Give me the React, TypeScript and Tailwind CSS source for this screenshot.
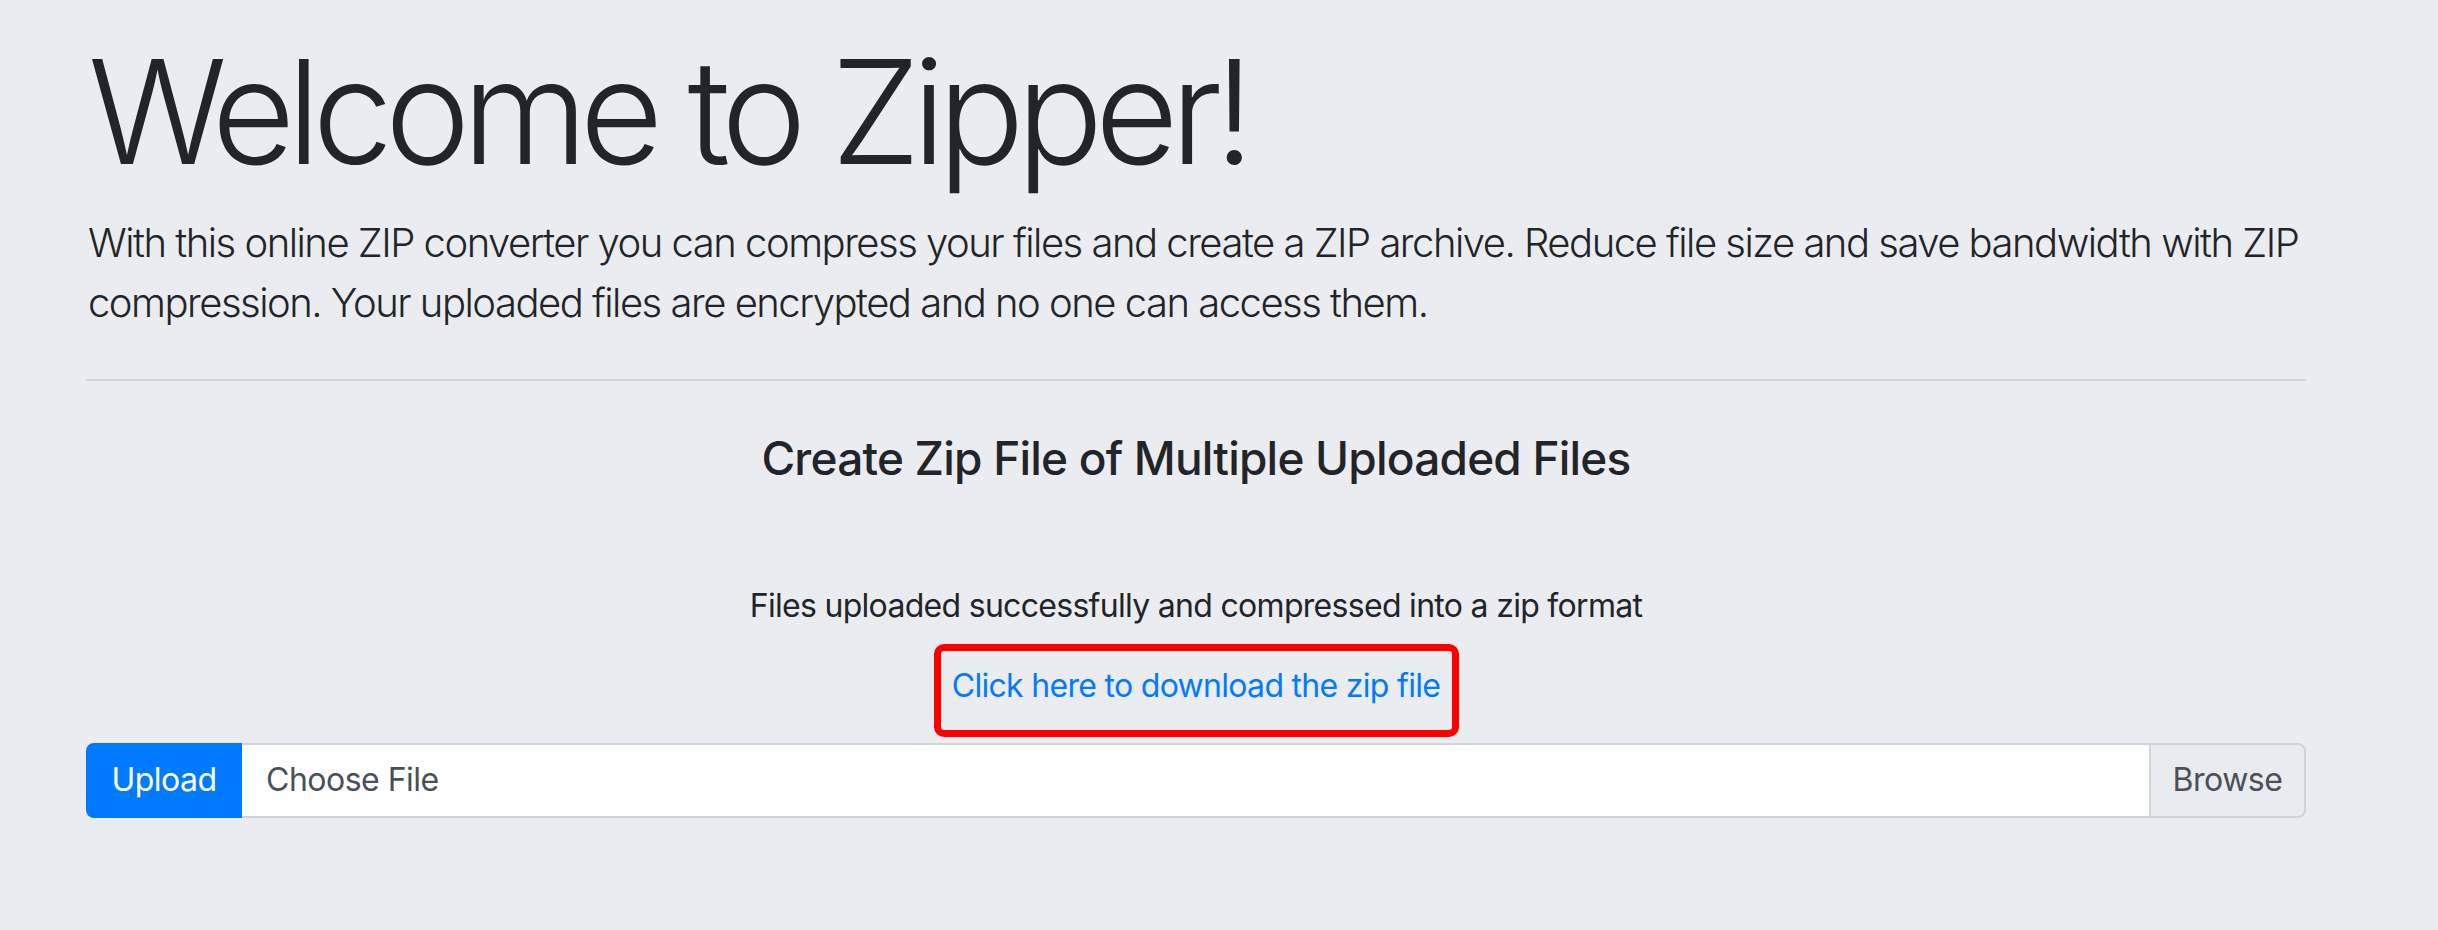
export default function App() {
  return (
    <main
      className="min-h-screen w-full bg-[#ebecf0] text-[#212529]"
      style={{ fontFamily: "Inter, 'Noto Sans', sans-serif" }}
    >
      <div className="ml-[86px] w-[2220px] pt-[26px]">
        <h1 className="text-[144px] font-light leading-[1.2] mb-[14px] pl-[2px] tracking-[-8.1px]">
          Welcome to Zipper!
        </h1>
        <p className="text-[40px] font-light leading-[60px] pl-[2px] tracking-[-1.5px] whitespace-nowrap">
          With this online ZIP converter you can compress your files and create a ZIP archive. Reduce file size and
          save bandwidth with ZIP
          <br />
          compression. Your uploaded files are encrypted and no one can access them.
        </p>
        <hr className="mt-[46px] border-0 h-[2px] bg-[#d2d3d8]" />

        <h4 className="mt-[50px] text-center text-[46px] font-medium leading-[1.2] tracking-[-0.8px]">
          Create Zip File of Multiple Uploaded Files
        </h4>

        <p className="mt-[96px] text-center text-[32px] leading-[48px] tracking-[-0.7px]">
          Files uploaded successfully and compressed into a zip format
        </p>

        <div className="mt-[14px] flex justify-center">
          <div className="w-[525px] border-[7px] border-[#ff0000] rounded-[10px] pt-[11px] pb-[20px] text-center">
            <a href="#" className="text-[32px] leading-[48px] text-[#007bff] tracking-[-0.7px] whitespace-nowrap">
              Click here to download the zip file
            </a>
          </div>
        </div>

        <div className="mt-[6px] flex h-[75px] text-[32px] tracking-[-0.5px]">
          <button className="w-[156px] bg-[#007bff] text-white rounded-l-[8px] leading-[48px]">Upload</button>
          <div className="flex-1 flex items-center bg-white border-y-2 border-[#ced4da] pl-[24px] text-[#495057]">
            Choose File
          </div>
          <div className="w-[157px] flex items-center justify-center bg-[#e9ecef] border-2 border-[#ced4da] rounded-r-[8px] text-[#495057]">
            Browse
          </div>
        </div>
      </div>
    </main>
  );
}
